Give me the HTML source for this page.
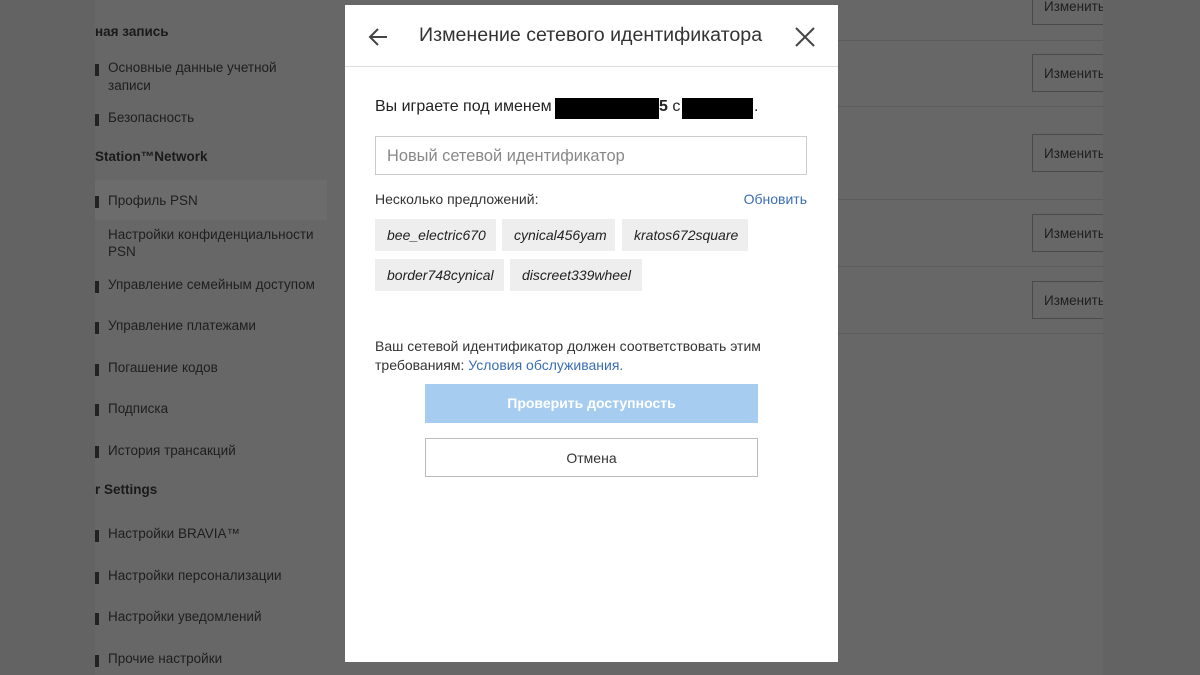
<!DOCTYPE html>
<html><head><meta charset="utf-8"><style>
*{margin:0;padding:0;box-sizing:border-box}
body{width:1200px;height:675px;overflow:hidden;background:#636363;font-family:"Liberation Sans","DejaVu Sans",sans-serif;position:relative}
.pg{position:absolute;left:95px;top:0;width:1008px;height:675px;background:#676767;overflow:hidden}
.a{position:absolute;color:#1e1e1e;font-size:13.5px;white-space:nowrap}
.h{font-weight:bold;color:#1a1a1a}
.bul{position:absolute;left:0;width:4px;height:12px;background:#222}
.btn{position:absolute;left:937px;width:90px;height:38px;border:1px solid #4a4a4a;color:#1e1e1e;font-size:13.5px;padding:11px 0 0 11px}
.ln{position:absolute;left:250px;width:760px;height:1px;background:#5c5c5c}
.m{position:absolute;left:345px;top:5px;width:493px;height:657px;background:#fff}
.hd{height:62px;border-bottom:1px solid #ddd;position:relative}
.t{position:absolute;left:74px;top:19px;font-size:19.6px;color:#333}
.chip{position:absolute;height:32px;background:#eee;font-style:italic;font-size:14px;color:#222;padding:8px 0 0 12px}
</style></head><body>
<div class="pg">
<div class="a h" style="left:0;top:24px">ная запись</div>
<div class="bul" style="top:64px"></div><div class="a" style="left:13px;top:60px">Основные данные учетной</div>
<div class="a" style="left:13px;top:78px">записи</div>
<div class="bul" style="top:114px"></div><div class="a" style="left:13px;top:110px">Безопасность</div>
<div class="a h" style="left:0;top:149px">Station™Network</div>
<div style="position:absolute;left:0;top:180px;width:232px;height:40px;background:#6c6c6c"></div>
<div class="bul" style="top:196px"></div><div class="a" style="left:13px;top:193px">Профиль PSN</div>
<div class="a" style="left:13px;top:227px">Настройки конфиденциальности</div>
<div class="a" style="left:13px;top:244px">PSN</div>
<div class="bul" style="top:281px"></div><div class="a" style="left:13px;top:277px">Управление семейным доступом</div>
<div class="bul" style="top:322px"></div><div class="a" style="left:13px;top:318px">Управление платежами</div>
<div class="bul" style="top:364px"></div><div class="a" style="left:13px;top:360px">Погашение кодов</div>
<div class="bul" style="top:404px"></div><div class="a" style="left:13px;top:401px">Подписка</div>
<div class="bul" style="top:446px"></div><div class="a" style="left:13px;top:443px">История трансакций</div>
<div class="a h" style="left:0;top:482px">r Settings</div>
<div class="bul" style="top:530px"></div><div class="a" style="left:13px;top:526px">Настройки BRAVIA™</div>
<div class="bul" style="top:572px"></div><div class="a" style="left:13px;top:568px">Настройки персонализации</div>
<div class="bul" style="top:613px"></div><div class="a" style="left:13px;top:609px">Настройки уведомлений</div>
<div class="bul" style="top:655px"></div><div class="a" style="left:13px;top:651px">Прочие настройки</div>
<div class="btn" style="top:-13px">Изменить</div>
<div class="ln" style="top:40px"></div>
<div class="btn" style="top:54px">Изменить</div>
<div class="ln" style="top:106px"></div>
<div class="btn" style="top:134px">Изменить</div>
<div class="ln" style="top:199px"></div>
<div class="btn" style="top:214px">Изменить</div>
<div class="ln" style="top:266px"></div>
<div class="btn" style="top:281px">Изменить</div>
<div class="ln" style="top:333px"></div>
</div>
<div class="m">
<div class="hd">
<svg style="position:absolute;left:22px;top:21px" width="22" height="22" viewBox="0 0 22 22"><path d="M20 11H3M11 3L3 11l8 8" fill="none" stroke="#444" stroke-width="2"/></svg>
<div class="t">Изменение сетевого идентификатора</div>
<svg style="position:absolute;left:449px;top:21px" width="22" height="22" viewBox="0 0 22 22"><path d="M2 2L20 20M20 2L2 20" fill="none" stroke="#444" stroke-width="2"/></svg>
</div>
<div style="position:absolute;left:30px;top:93px;font-size:16px;color:#222;white-space:nowrap">Вы играете под именем</div>
<div style="position:absolute;left:210px;top:93px;width:104px;height:21px;background:#000"></div>
<div style="position:absolute;left:314px;top:93px;font-size:16px;color:#222;white-space:nowrap"><b>5</b> с</div>
<div style="position:absolute;left:337px;top:93px;width:71px;height:21px;background:#000"></div>
<div style="position:absolute;left:409px;top:93px;font-size:16px;color:#222">.</div>
<div style="position:absolute;left:30px;top:131px;width:432px;height:39px;border:1px solid #ccc;font-size:16.4px;color:#888;padding:10px 0 0 11px;white-space:nowrap">Новый сетевой идентификатор</div>
<div style="position:absolute;left:30px;top:186px;font-size:14px;color:#333">Несколько предложений:</div>
<div style="position:absolute;right:31px;top:186px;font-size:14px;color:#3a6eb5">Обновить</div>
<div class="chip" style="left:30px;top:214px;width:121px">bee_electric670</div>
<div class="chip" style="left:157px;top:214px;width:113px">cynical456yam</div>
<div class="chip" style="left:277px;top:214px;width:126px">kratos672square</div>
<div class="chip" style="left:30px;top:254px;width:129px">border748cynical</div>
<div class="chip" style="left:165px;top:254px;width:132px">discreet339wheel</div>
<div style="position:absolute;left:30px;top:332px;width:420px;font-size:14px;line-height:19px;color:#333">Ваш сетевой идентификатор должен соответствовать этим требованиям: <span style="color:#3a6eb5">Условия обслуживания.</span></div>
<div style="position:absolute;left:80px;top:379px;width:333px;height:39px;background:#a6cdf0;color:#fff;font-weight:bold;font-size:14px;text-align:center;line-height:39px">Проверить доступность</div>
<div style="position:absolute;left:80px;top:433px;width:333px;height:39px;border:1px solid #bbb;color:#333;font-size:14px;text-align:center;line-height:39px">Отмена</div>
</div>
</body></html>
